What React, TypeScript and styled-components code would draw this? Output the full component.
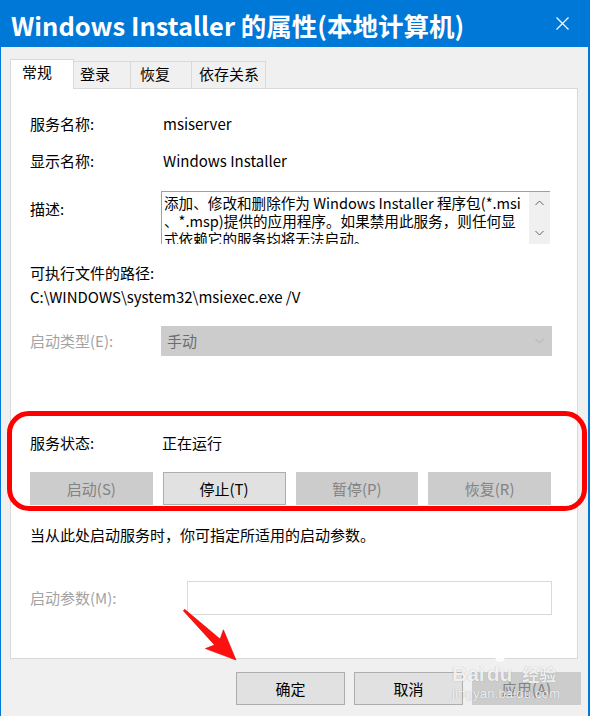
import React from "react";
import styled, { createGlobalStyle } from "styled-components";

const FONT = `"Noto Sans CJK SC", "Noto Sans", sans-serif`;

const GlobalStyle = createGlobalStyle`
  html, body { margin: 0; padding: 0; background: #f0f0f0; }
  body { font-family: ${FONT}; }
  * { box-sizing: border-box; }
`;

const Window = styled.div`
  position: relative;
  width: 590px;
  height: 716px;
  background: #f0f0f0;
  border-left: 1px solid #0078d7;
  border-right: 2px solid #0078d7;
  overflow: hidden;
  font-family: ${FONT};
  font-size: 15px;
  color: #000;
`;

const TitleBar = styled.div`
  height: 47px;
  background: #0078d7;
  display: flex;
  align-items: center;
  justify-content: space-between;
  padding: 2px 19px 0 10px;
`;

const Title = styled.div`
  color: #fff;
  font-size: 25.5px;
  font-weight: 700;
  line-height: 40px;
  white-space: nowrap;
`;

const CloseIcon = styled.svg`
  width: 13px;
  height: 13px;
  display: block;
  margin-top: -2px;
`;

const Body = styled.div`
  padding: 12px 10px 0 9px;
`;

const TabStrip = styled.div`
  display: flex;
  align-items: flex-end;
  height: 29px;
`;

const Tab = styled.div<{ $active?: boolean; $w: number; $pl: number }>`
  position: relative;
  z-index: ${(p) => (p.$active ? 1 : 0)};
  width: ${(p) => p.$w}px;
  height: ${(p) => (p.$active ? 30 : 27)}px;
  margin-bottom: ${(p) => (p.$active ? -1 : 0)}px;
  margin-left: -1px;
  &:first-child { margin-left: 0; }
  padding-left: ${(p) => p.$pl}px;
  border: 1px solid #d9d9d9;
  border-bottom: none;
  background: ${(p) => (p.$active ? "#fff" : "#f0f0f0")};
  line-height: ${(p) => (p.$active ? 23 : 24)}px;
  white-space: nowrap;
`;

const Panel = styled.div`
  height: 571px;
  border: 1px solid #d9d9d9;
  background: #fff;
  padding: 25px 26px 0 19px;
`;

const InfoRow = styled.div<{ $mt?: number; $col?: number; $h?: number; $muted?: boolean }>`
  display: grid;
  grid-template-columns: ${(p) => p.$col ?? 131}px 1fr;
  align-items: center;
  height: ${(p) => p.$h ?? 20}px;
  line-height: 20px;
  margin-top: ${(p) => p.$mt ?? 0}px;
  color: ${(p) => (p.$muted ? "#a3a3a3" : "#000")};
  white-space: nowrap;
`;

const TextLine = styled.div<{ $mt?: number }>`
  height: 20px;
  line-height: 20px;
  margin-top: ${(p) => p.$mt ?? 0}px;
  white-space: nowrap;
`;

const Value = styled.span<{ $pl?: number }>`
  padding-left: ${(p) => p.$pl ?? 2}px;
`;

const DescRow = styled.div`
  display: grid;
  grid-template-columns: 131px 1fr;
  align-items: start;
  margin-top: 20px;
  line-height: 20px;
`;

const DescLabel = styled.span`
  margin-top: 8px;
`;

const DescBox = styled.div`
  display: flex;
  height: 53px;
  margin-right: 1px;
  border-top: 1px solid #a0a0a0;
  border-left: 1px solid #a0a0a0;
  overflow: hidden;
`;

const DescText = styled.div`
  flex: 1;
  padding: 2px 0 0 2px;
  font-size: 14.6px;
  line-height: 18px;
  overflow: hidden;
  white-space: nowrap;
`;

const ScrollBar = styled.div`
  width: 21px;
  background: #f0f0f0;
  display: flex;
  flex-direction: column;
  align-items: center;
  justify-content: space-between;
  padding: 8px 0 8px;
`;

const ScrollArrow = styled.svg`
  width: 9px;
  height: 6px;
  display: block;
`;

const Combo = styled.div`
  height: 30px;
  margin-right: -1px;
  background: #cccccc;
  border: 1px solid #cccccc;
  display: flex;
  align-items: center;
  justify-content: space-between;
  padding: 0 7px 0 5px;
  color: #6d6d6d;
`;

const StatusSection = styled.div`
  position: relative;
  margin-top: 77px;
  &::after {
    content: "";
    position: absolute;
    top: -22px;
    left: -23px;
    right: -36px;
    bottom: -6px;
    border: 5px solid #ff0000;
    border-radius: 22px;
    pointer-events: none;
  }
`;

const ButtonRow = styled.div`
  display: grid;
  grid-template-columns: repeat(4, 1fr);
  gap: 10px;
  margin-top: 19px;
`;

const ActionButton = styled.div<{ $disabled?: boolean; $w?: number }>`
  height: 33px;
  width: ${(p) => (p.$w ? `${p.$w}px` : "auto")};
  display: flex;
  align-items: center;
  justify-content: center;
  border: 1px solid ${(p) => (p.$disabled ? "#cccccc" : "#adadad")};
  background: ${(p) => (p.$disabled ? "#cccccc" : "#e1e1e1")};
  color: ${(p) => (p.$disabled ? "#838383" : "#000")};
  white-space: nowrap;
`;

const InputBox = styled.div`
  height: 34px;
  margin-right: -1px;
  background: #fff;
  border: 1px solid #d9d9d9;
`;

const Footer = styled.div`
  display: flex;
  justify-content: flex-end;
  gap: 9px;
  padding: 13px 7px 0 0;
`;

const Overlay = styled.svg`
  position: absolute;
  left: 175px;
  top: 600px;
  width: 70px;
  height: 70px;
  pointer-events: none;
`;

const Watermark = styled.div`
  position: absolute;
  left: 451px;
  top: 650px;
  color: rgba(255, 255, 255, 0.85);
  text-shadow: 0 0 1px rgba(0, 0, 0, 0.3);
  pointer-events: none;
  font-family: "Liberation Sans", Arial, sans-serif;
`;

const MarkTop = styled.div`
  display: flex;
  align-items: flex-end;
  height: 36px;
  font-size: 21px;
  font-weight: 700;
  line-height: 24px;
`;

const MarkDu = styled.div`
  position: relative;
  display: flex;
  flex-direction: column;
  align-items: center;
  margin: 0 10px 0 2px;
`;

const Paw = styled.svg`
  width: 22px;
  height: 16px;
  display: block;
`;

const MarkCn = styled.span`
  font-family: ${FONT};
  font-size: 17px;
  font-weight: 700;
`;

const MarkUrl = styled.div`
  font-size: 13px;
  line-height: 16px;
  letter-spacing: 0.2px;
`;

export default function App() {
  return (
    <>
      <GlobalStyle />
      <Window>
        <TitleBar>
          <Title>Windows Installer 的属性(本地计算机)</Title>
          <CloseIcon viewBox="0 0 13 13">
            <path d="M0.5 0.5 L12.5 12.5 M12.5 0.5 L0.5 12.5" stroke="#fff" strokeWidth="1.2" />
          </CloseIcon>
        </TitleBar>
        <Body>
          <TabStrip>
            <Tab $active $w={64} $pl={11}>常规</Tab>
            <Tab $w={58} $pl={6}>登录</Tab>
            <Tab $w={62} $pl={9}>恢复</Tab>
            <Tab $w={75} $pl={7}>依存关系</Tab>
          </TabStrip>
          <Panel>
            <InfoRow>
              <span>服务名称:</span>
              <Value>msiserver</Value>
            </InfoRow>
            <InfoRow $mt={17}>
              <span>显示名称:</span>
              <Value>Windows Installer</Value>
            </InfoRow>
            <DescRow>
              <DescLabel>描述:</DescLabel>
              <DescBox>
                <DescText>
                  <div>添加、修改和删除作为 Windows Installer 程序包(*.msi</div>
                  <div>、*.msp)提供的应用程序。如果禁用此服务，则任何显</div>
                  <div>式依赖它的服务均将无法启动。</div>
                </DescText>
                <ScrollBar>
                  <ScrollArrow viewBox="0 0 9 6">
                    <path d="M0.5 5 L4.5 1 L8.5 5" fill="none" stroke="#606060" strokeWidth="1" />
                  </ScrollArrow>
                  <ScrollArrow viewBox="0 0 9 6">
                    <path d="M0.5 1 L4.5 5 L8.5 1" fill="none" stroke="#606060" strokeWidth="1" />
                  </ScrollArrow>
                </ScrollBar>
              </DescBox>
            </DescRow>
            <TextLine $mt={19}>可执行文件的路径:</TextLine>
            <TextLine $mt={4}>C:\WINDOWS\system32\msiexec.exe /V</TextLine>
            <InfoRow $mt={19} $h={30} $muted>
              <span>启动类型(E):</span>
              <Combo>
                <span>手动</span>
                <ScrollArrow viewBox="0 0 9 6">
                  <path d="M0.5 1 L4.5 5 L8.5 1" fill="none" stroke="#b0b0b0" strokeWidth="1" />
                </ScrollArrow>
              </Combo>
            </InfoRow>
            <StatusSection>
              <InfoRow>
                <span>服务状态:</span>
                <Value $pl={1}>正在运行</Value>
              </InfoRow>
              <ButtonRow>
                <ActionButton $disabled>启动(S)</ActionButton>
                <ActionButton>停止(T)</ActionButton>
                <ActionButton $disabled>暂停(P)</ActionButton>
                <ActionButton $disabled>恢复(R)</ActionButton>
              </ButtonRow>
            </StatusSection>
            <TextLine $mt={20}>当从此处启动服务时，你可指定所适用的启动参数。</TextLine>
            <InfoRow $mt={36} $h={34} $col={157} $muted>
              <span>启动参数(M):</span>
              <InputBox />
            </InfoRow>
          </Panel>
        </Body>
        <Footer>
          <ActionButton $w={109}>确定</ActionButton>
          <ActionButton $w={109}>取消</ActionButton>
          <ActionButton $w={109} $disabled>应用(A)</ActionButton>
        </Footer>
        <Overlay viewBox="176 600 70 70">
          <polygon
            points="184.7,609.3 220.1,639.1 223.4,629.8 236,660 205.4,648.6 214.5,644.9 183.3,610.7"
            fill="#ff1010"
            stroke="#e00000"
            strokeWidth="0.6"
            strokeLinejoin="round"
          />
        </Overlay>
        <Watermark>
          <MarkTop>
            <span>Bai</span>
            <MarkDu>
              <Paw viewBox="0 0 22 16">
                <ellipse cx="4" cy="7" rx="2.2" ry="2.8" fill="rgba(255,255,255,0.85)" />
                <ellipse cx="8.5" cy="3" rx="2.2" ry="2.8" fill="rgba(255,255,255,0.85)" />
                <ellipse cx="13.5" cy="3" rx="2.2" ry="2.8" fill="rgba(255,255,255,0.85)" />
                <ellipse cx="18" cy="7" rx="2.2" ry="2.8" fill="rgba(255,255,255,0.85)" />
                <ellipse cx="11" cy="12.5" rx="4.5" ry="3.3" fill="rgba(255,255,255,0.85)" />
              </Paw>
              <span>du</span>
            </MarkDu>
            <MarkCn>经验</MarkCn>
          </MarkTop>
          <MarkUrl>jingyan.baidu.com</MarkUrl>
        </Watermark>
      </Window>
    </>
  );
}
